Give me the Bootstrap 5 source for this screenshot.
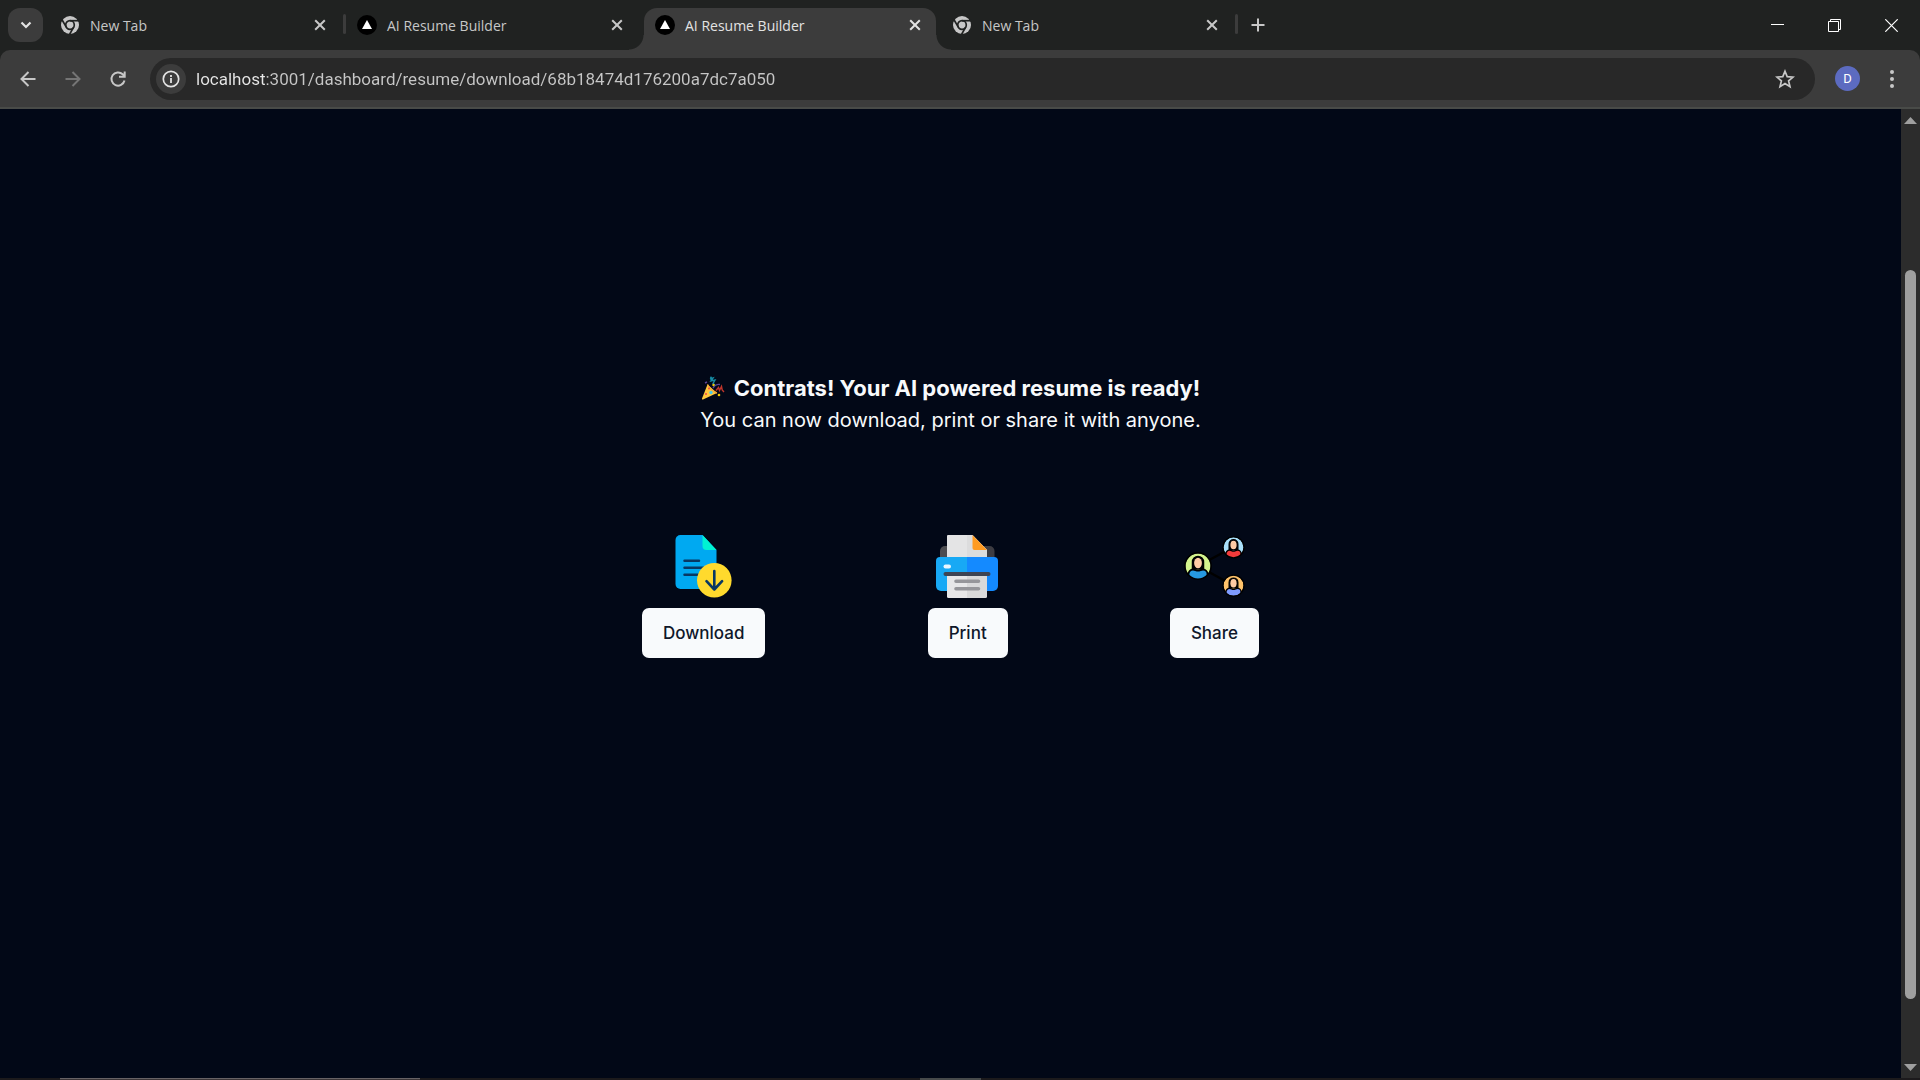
<!DOCTYPE html>
<html lang="en">
<head>
<meta charset="utf-8">
<meta name="viewport" content="width=device-width, initial-scale=1">
<title>AI Resume Builder</title>
<link href="https://cdn.jsdelivr.net/npm/bootstrap@5.3.0/dist/css/bootstrap.min.css" rel="stylesheet">
<style>
  :root { --strip: #202221; --bar: #3c3c3c; --page: #020817; --ink: #c7c7c7; }
  body { background: var(--page); font-family: "Open Sans", "Noto Sans", sans-serif; color: var(--ink); }
  svg { display: block; flex: none; }
  button.plain { background: none; border: 0; padding: 0; color: inherit; display: flex; align-items: center; justify-content: center; }

  .tab-strip { height: 50px; background: var(--strip); }
  .tab-strip .tab-search { width: 35px; height: 34px; margin: 0 7px 0 8px; border-radius: 12px; background: var(--bar); color: #e3e3e3; }
  .browser-tab { position: relative; width: 297px; height: 42px; margin-top: 8px; padding: 0 19px 8px 10px; font-size: 14px; }
  .browser-tab a { color: inherit; gap: 10px; line-height: 20px; }
  .browser-tab a span { padding-top: 2px; }
  .browser-tab .tab-close { width: 16px; height: 16px; }
  .browser-tab.ruled::after { content: ""; position: absolute; right: 1px; top: 6px; width: 3px; height: 20px; border-radius: 2px; background: var(--bar); }
  .browser-tab.current { color: #e3e3e3; width: 292px; margin-right: 6px; padding-left: 11px; padding-right: 13px; background: var(--bar); border-radius: 13px 13px 0 0; }
  .browser-tab.current::before, .browser-tab.current::after { content: ""; position: absolute; bottom: 0; width: 15px; height: 15px; }
  .browser-tab.current::before { right: 100%; background: radial-gradient(circle at 0 0, transparent 14px, var(--bar) 15px); }
  .browser-tab.current::after { left: 100%; background: radial-gradient(circle at 100% 0, transparent 14px, var(--bar) 15px); }
  .new-tab { width: 24px; height: 24px; margin-left: 7px; }
  .win-btn { width: 57px; height: 50px; color: #fff !important; }

  .tool-wrap { background: var(--strip); }
  .tool-bar { height: 59px; background: var(--bar); border-bottom: 2px solid #494b48; border-radius: 10px 10px 0 0; padding: 0 16px 0 12px; }
  .tool-bar .nav-btn { width: 32px; height: 32px; margin-right: 13px; }
  .address { height: 42px; border-radius: 21px; background: #282828; padding: 0 20px 0 6px; margin-left: 3px; }
  .address .site-info { width: 30px; height: 30px; border-radius: 50%; background: var(--bar); color: #e3e3e3; }
  .address input { border: 0; outline: 0; padding: 0 0 0 10px; font-family: Roboto, sans-serif; font-size: 17px; line-height: 24px; color: transparent;
    background: linear-gradient(90deg, #e8e8e8 80px, var(--ink) 80px); -webkit-background-clip: text; background-clip: text; }
  .avatar { width: 25px; height: 25px; border-radius: 50%; background: #5c6bc0 !important; color: #fff !important; font: 13px Roboto, sans-serif; margin: 0 20px; }
  .more { width: 24px; height: 32px; }

  .viewport-row { min-height: 0; }
  .page-body { background: var(--page); font-family: Inter, sans-serif; color: #f8fafc; padding-top: 263px; }
  .page-title { font-size: 22px; line-height: 32px; font-weight: 700; gap: 9px; }
  .page-note { font-size: 20px; line-height: 32px; margin-bottom: 98px; }
  .choices { width: 100%; max-width: 617px; }
  .choice { gap: 9px; }
  .choice .btn { --bs-btn-bg: #f8fafc; --bs-btn-color: #0f172a; --bs-btn-border-width: 0; --bs-btn-hover-bg: #e2e8f0; --bs-btn-hover-color: #0f172a;
    height: 50px; padding: 0 21px; border-radius: 7px; font-size: 17px; font-weight: 500; line-height: 24px; }
  .scroll-track { width: 19px; background: #2c2c2c; padding: 8px 0 7px; }
  .scroll-gap-top { flex: 146; }
  .scroll-thumb { flex: 729; width: 11px; border-radius: 6px; background: #9f9f9f; }
  .scroll-gap-end { flex: 65; }
  .task-edge { height: 2px; background: #1c1a1c; padding-left: 60px; }
  .task-search { width: 360px; background: #3a3436; border-top: 1px solid #686365; }
  .task-active { width: 61px; margin-left: 500px; background: #474a4b; }
</style>
<script src="https://cdn.jsdelivr.net/npm/bootstrap@5.3.0/dist/js/bootstrap.bundle.min.js"></script>
</head>
<body class="d-flex flex-column vh-100 overflow-hidden">

<svg width="0" height="0" class="position-absolute" aria-hidden="true">
  <symbol id="i-chrome" viewBox="0 0 20 20">
    <circle cx="10" cy="10" r="9" fill="#c7c7c7"/>
    <circle cx="10" cy="10" r="4.3" fill="none" stroke="#202221" stroke-width="1.7"/>
    <g stroke="#202221" stroke-width="1.7"><path d="M10 5.7H20"/><path d="M10 5.7H20" transform="rotate(120 10 10)"/><path d="M10 5.7H20" transform="rotate(240 10 10)"/></g>
  </symbol>
  <symbol id="i-next" viewBox="0 0 20 20"><circle cx="10" cy="10" r="10" fill="#000"/><path d="M10 5l5 9H5z" fill="#fff"/></symbol>
  <symbol id="i-close" viewBox="0 0 16 16"><path d="M3.2 3.2l9.6 9.6M12.8 3.2l-9.6 9.6" stroke="currentColor" stroke-width="2"/></symbol>
</svg>

<header>
  <div class="tab-strip d-flex align-items-center">
    <button class="plain tab-search" aria-label="Search tabs"><svg width="14" height="14" viewBox="0 0 14 14"><path d="M2.5 4.500L7 9l4.500-4.500" fill="none" stroke="currentColor" stroke-width="2.200"/></svg></button>
    <div class="browser-tab ruled d-flex align-items-center">
      <a href="#" class="d-flex flex-fill align-items-center text-decoration-none"><svg width="20" height="20"><use href="#i-chrome"/></svg><span>New Tab</span></a>
      <button class="plain tab-close" aria-label="Close"><svg width="16" height="16"><use href="#i-close"/></svg></button>
    </div>
    <div class="browser-tab d-flex align-items-center">
      <a href="#" class="d-flex flex-fill align-items-center text-decoration-none"><svg width="20" height="20"><use href="#i-next"/></svg><span>AI Resume Builder</span></a>
      <button class="plain tab-close" aria-label="Close"><svg width="16" height="16"><use href="#i-close"/></svg></button>
    </div>
    <div class="browser-tab current d-flex align-items-center">
      <a href="#" class="d-flex flex-fill align-items-center text-decoration-none"><svg width="20" height="20"><use href="#i-next"/></svg><span>AI Resume Builder</span></a>
      <button class="plain tab-close" aria-label="Close"><svg width="16" height="16"><use href="#i-close"/></svg></button>
    </div>
    <div class="browser-tab ruled d-flex align-items-center">
      <a href="#" class="d-flex flex-fill align-items-center text-decoration-none"><svg width="20" height="20"><use href="#i-chrome"/></svg><span>New Tab</span></a>
      <button class="plain tab-close" aria-label="Close"><svg width="16" height="16"><use href="#i-close"/></svg></button>
    </div>
    <button class="plain new-tab" aria-label="New tab"><svg width="14" height="14" viewBox="0 0 14 14"><path d="M7 0.500v13M0.500 7h13" stroke="currentColor" stroke-width="2"/></svg></button>
    <div class="d-flex ms-auto">
      <button class="plain win-btn" aria-label="Minimize"><svg width="13" height="13" viewBox="0 0 13 13"><path d="M0 5.500h13" stroke="currentColor"/></svg></button>
      <button class="plain win-btn" aria-label="Restore"><svg width="13" height="13" viewBox="0 0 13 13"><path d="M.5 2.500h10v10H.5zM2.500 2.500v-2h10v10h-2" fill="none" stroke="currentColor"/></svg></button>
      <button class="plain win-btn" aria-label="Close window"><svg width="13" height="13" viewBox="0 0 13 13"><path d="M.3.3l12.400 12.400M12.700.3L.3 12.700" stroke="currentColor" stroke-width="1.200"/></svg></button>
    </div>
  </div>

  <div class="tool-wrap">
    <div class="tool-bar d-flex align-items-center">
      <button class="plain nav-btn" aria-label="Back"><svg width="16" height="16" viewBox="0 0 16 16"><path d="M15.500 8H2M8.500 1L1.500 8l7 7" fill="none" stroke="currentColor" stroke-width="2"/></svg></button>
      <button class="plain nav-btn" aria-label="Forward" disabled><svg width="16" height="16" viewBox="0 0 16 16"><path d="M.5 8H14M7.500 1l7 7-7 7" fill="none" stroke="#757575" stroke-width="2"/></svg></button>
      <button class="plain nav-btn" aria-label="Reload"><svg width="18" height="18" viewBox="0 0 18 18"><path d="M15.500 10.500A6.600 6.600 0 1 1 13.700 4.300L15.500 6M15.700 1.500v5.300H10" fill="none" stroke="currentColor" stroke-width="2"/></svg></button>
      <div class="address d-flex flex-fill align-items-center">
        <button class="plain site-info" aria-label="View site information"><svg width="18" height="18" viewBox="0 0 18 18"><circle cx="9" cy="9" r="7.700" fill="none" stroke="currentColor" stroke-width="1.700"/><path d="M9 8v5M9 5v2" stroke="currentColor" stroke-width="1.800"/></svg></button>
        <input class="flex-fill" type="text" aria-label="Address" value="localhost:3001/dashboard/resume/download/68b18474d176200a7dc7a050">
        <button class="plain" aria-label="Bookmark this tab"><svg width="20" height="20" viewBox="0 0 20 20"><path d="M10 2.200l2.200 5.400 5.900.5-4.500 3.800 1.400 5.800-5-3.100-5 3.100 1.400-5.800L1.900 8.100l5.900-.5z" fill="none" stroke="currentColor" stroke-width="1.700"/></svg></button>
      </div>
      <button class="plain avatar" aria-label="Profile">D</button>
      <button class="plain more" aria-label="Menu"><svg width="4" height="18" viewBox="0 0 4 18" fill="currentColor"><circle cx="2" cy="2" r="2"/><circle cx="2" cy="9" r="2"/><circle cx="2" cy="16" r="2"/></svg></button>
    </div>
  </div>
</header>

<div class="viewport-row d-flex flex-fill">
  <main class="page-body flex-fill d-flex flex-column align-items-center">
    <h1 class="page-title d-flex align-items-center mb-0">
      <svg width="24" height="24" viewBox="0 0 24 24" role="img" aria-label="Party popper">
        <path d="M6.500 8.500L1 22.500c-.3.800.2 1.200 1 .9L16 17z" fill="#ffc83d"/>
        <path d="M6.500 8.500c2 4 5 7 9.500 8.500" fill="none" stroke="#f7a836" stroke-width="1.500"/>
        <circle cx="10" cy="16.500" r="1.700" fill="#4ac8e8"/><circle cx="5" cy="18" r="1" fill="#ee4b45"/><circle cx="8" cy="12.500" r="1" fill="#ee4b45"/>
        <path d="M9 3l3-1-2 3 4-1-2 3.500 2 1.500" fill="none" stroke="#168ba4" stroke-width="1.400"/>
        <path d="M15 14.500l2.500-3 1 3 2-4 .7 3.500L23 16" fill="none" stroke="#bf352b" stroke-width="1.400"/>
        <path d="M12 12c2-3 4-4 7-3.500" fill="none" stroke="#594596" stroke-width="1.400"/>
        <path d="M4 7l2-1" stroke="#594596" stroke-width="1.400"/>
        <circle cx="18" cy="19" r="1.300" fill="#f3c900"/><circle cx="12.500" cy="9" r="1.200" fill="#f3c900"/><circle cx="10" cy="1.400" r="1" fill="#168ba4"/>
      </svg>
      <span>Contrats! Your AI powered resume is ready!</span>
    </h1>
    <p class="page-note">You can now download, print or share it with anyone.</p>

    <div class="choices d-flex justify-content-between">
      <div class="choice d-flex flex-column align-items-center">
        <svg width="65" height="65" viewBox="0 0 65 65">
          <path d="M9.500 1h22L45.500 16v39h-36a5 5 0 0 1-5-5V6a5 5 0 0 1 5-5z" fill="#00a9f1"/>
          <path d="M31.500 1L45.500 16h-10a4 4 0 0 1-4-4z" fill="#00f2d3"/>
          <path d="M13.500 26.700h14.500M13.500 33.700h19M13.500 40.700h14.500" stroke="#083863" stroke-width="2.500" stroke-linecap="round"/>
          <circle cx="43.300" cy="46.300" r="17.300" fill="#ffda2d"/>
          <path d="M43.300 37v18.500M35.500 47.200l7.800 8.300 7.800-8.300" fill="none" stroke="#083863" stroke-width="2.600" stroke-linecap="round" stroke-linejoin="round"/>
        </svg>
        <button class="btn" type="button">Download</button>
      </div>
      <div class="choice d-flex flex-column align-items-center">
        <svg width="65" height="65" viewBox="0 0 65 65">
          <path d="M5 24v-7a5 5 0 0 1 5-5h22v12z" fill="#4c4c50"/><path d="M32 12h22.500a5 5 0 0 1 5 5v7H32z" fill="#3d3c42"/>
          <path d="M12 2a1 1 0 0 1 1-1h24.500L52 16v8H12z" fill="#e4e4e5"/>
          <path d="M32 1h5.500L52 16v8H32z" fill="#dcdcdd"/><path d="M37.500 1L52 16H39.500a2 2 0 0 1-2-2z" fill="#ff9b22"/>
          <path d="M32 23H5a4 4 0 0 0-4 4v25a5 5 0 0 0 5 5h26z" fill="#18a9f5"/>
          <path d="M32 23h27a4 4 0 0 1 4 4v25a5 5 0 0 1-5 5H32z" fill="#148aff"/>
          <rect x="8.500" y="30.500" width="7.500" height="4" rx="2" fill="#e9f6ff"/>
          <path d="M12 40h20v24H13.500a1.500 1.500 0 0 1-1.500-1.500z" fill="#e7e7e8"/><path d="M32 40h20v22.500a1.500 1.500 0 0 1-1.500 1.500H32z" fill="#d9d9da"/>
          <path d="M10.500 40h43" stroke="#3e4453" stroke-width="4" stroke-linecap="round"/>
          <path d="M21 47.200h22.500M21 54.700h22.500" stroke="#96969a" stroke-width="3.600" stroke-linecap="round"/>
        </svg>
        <button class="btn" type="button">Print</button>
      </div>
      <div class="choice d-flex flex-column align-items-center">
        <svg width="65" height="65" viewBox="0 0 65 65">
          <defs><clipPath id="face"><circle cx="16" cy="16" r="13"/></clipPath>
            <g id="person" clip-path="url(#face)"><path d="M10.500 12a5.500 5.500 0 0 1 11 0v7h-11z" fill="#000" stroke="#000" stroke-width="1.500"/><ellipse cx="16" cy="13" rx="3.900" ry="5.300" fill="#ffcba4"/><path d="M6.500 32V24a4.500 4.500 0 0 1 4.500-4.500c2 0 3 1.200 5 1.200s3-1.200 5-1.200a4.500 4.500 0 0 1 4.500 4.500V32z" stroke="#000" stroke-width="1.800"/></g>
          </defs>
          <path d="M16 32L51.500 13M16 32l35.500 19.500" stroke="#000" stroke-width="2.500"/>
          <g transform="translate(0 16)"><circle cx="16" cy="16" r="12.500" fill="#d4f48d"/><use href="#person" fill="#2699df"/><circle cx="16" cy="16" r="13.200" fill="none" stroke="#000" stroke-width="1.500"/></g>
          <g transform="translate(38.700 .5) scale(.8)"><circle cx="16" cy="16" r="12.500" fill="#a9e0fa"/><use href="#person" fill="#f33b3b"/><circle cx="16" cy="16" r="13.200" fill="none" stroke="#000" stroke-width="1.500"/></g>
          <g transform="translate(38.700 38.800) scale(.8)"><circle cx="16" cy="16" r="12.500" fill="#ffc36b"/><use href="#person" fill="#7e9bff"/><circle cx="16" cy="16" r="13.200" fill="none" stroke="#000" stroke-width="1.500"/></g>
        </svg>
        <button class="btn" type="button">Share</button>
      </div>
    </div>
  </main>

  <div class="scroll-track d-flex flex-column align-items-center" aria-hidden="true">
    <svg width="13" height="7" viewBox="0 0 13 7"><path d="M6.500 0L13 7H0z" fill="#9f9f9f"/></svg>
    <div class="scroll-gap-top"></div>
    <div class="scroll-thumb"></div>
    <div class="scroll-gap-end"></div>
    <svg width="13" height="7" viewBox="0 0 13 7"><path d="M6.500 7L0 0h13z" fill="#9f9f9f"/></svg>
  </div>
</div>

<div class="task-edge d-flex" aria-hidden="true"><div class="task-search"></div><div class="task-active"></div></div>

</body>
</html>
